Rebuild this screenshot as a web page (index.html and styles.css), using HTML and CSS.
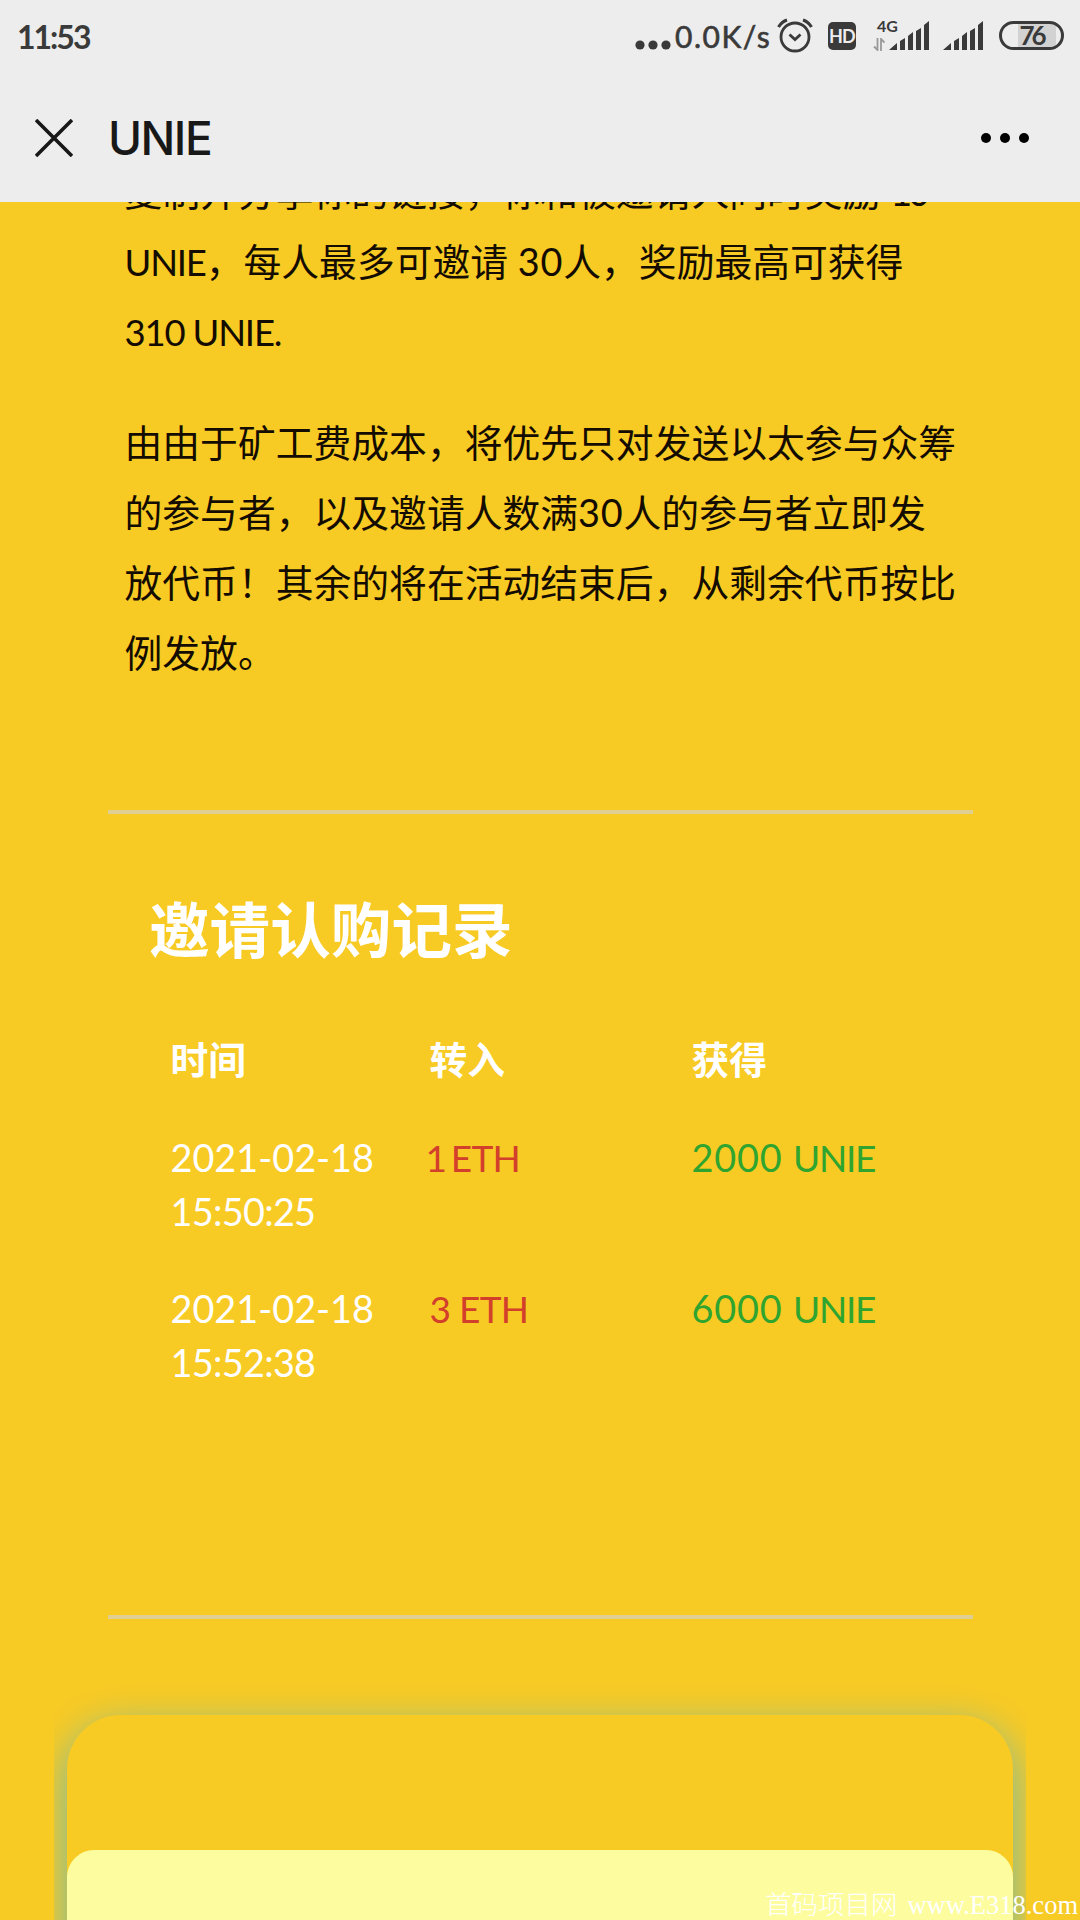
FILE: index.html
```html
<!DOCTYPE html>
<html lang="zh-CN">
<head>
    <meta charset="UTF-8">
    <meta name="viewport" content="width=device-width, initial-scale=1.0">
    <title>UNIE</title>
    <link rel="stylesheet" href="styles.css">
</head>
<body>
    <header>
        <div class="status-bar">
            <span class="clock">11:53</span>
            <div class="status-icons">
                <svg class="dots" width="36" height="10" viewBox="0 0 36 10" fill="#3a3a3a">
                    <circle cx="5" cy="5" r="4.6"/>
                    <circle cx="18" cy="5" r="4.6"/>
                    <circle cx="31" cy="5" r="4.6"/>
                </svg>
                <span class="speed">0.0K/s</span>
                <svg class="alarm" width="36" height="36" viewBox="0 0 36 36" fill="none" stroke="#3a3a3a" stroke-width="2.8">
                    <circle cx="18" cy="19" r="14"/>
                    <path d="M12.5 16.5l5.5 5 5.5-5"/>
                    <path d="M1.5 9Q5 3.500 10 2M34.500 9Q31 3.500 26 2" stroke-width="3.2"/>
                </svg>
                <span class="hd">HD</span>
                <div class="signal-4g">
                    <span class="network">4G</span>
                    <svg class="arrows" width="12" height="13" viewBox="0 0 12 13" fill="none" stroke="#999" stroke-width="1.8">
                        <path d="M4.5 0v12L1 8.500M8 13V1l3.500 3.500"/>
                    </svg>
                    <svg class="bars" width="41" height="30" viewBox="0 0 41 30" fill="#3a3a3a">
                        <path d="M0 29l8-7v7zM11 20l5-3v12h-5zM19 15l5-4v18h-5zM27 10l5-3v22h-5zM35 4l5-4v29h-5z"/>
                    </svg>
                </div>
                <svg class="bars second" width="41" height="30" viewBox="0 0 41 30" fill="#3a3a3a">
                    <path d="M0 29l8-7v7zM11 20l5-3v12h-5zM19 15l5-4v18h-5zM27 10l5-3v22h-5zM35 4l5-4v29h-5z"/>
                </svg>
                <span class="battery">76</span>
            </div>
        </div>
        <div class="nav-bar">
            <svg class="close" width="38" height="38" viewBox="0 0 38 38" stroke="#181818" stroke-width="3.6">
                <path d="M1 1l36 36M37 1L1 37"/>
            </svg>
            <h1>UNIE</h1>
            <svg class="more" width="50" height="12" viewBox="0 0 50 12" fill="#000">
                <circle cx="6" cy="6" r="5"/>
                <circle cx="25" cy="6" r="5"/>
                <circle cx="44" cy="6" r="5"/>
            </svg>
        </div>
    </header>

    <main>
        <div class="intro">
            <p>复制并分享你的链接，你和被邀请人同时奖励 <span class="ten">10</span><br><span class="latin">UNIE</span>，每人最多可邀请 <span class="thirty">30</span>人，奖励最高可获得<br><span class="latin">310 UNIE.</span></p>
            <p>由由于矿工费成本，将优先只对发送以太参与众筹<br>的参与者，以及邀请人数满<span class="thirty">30</span>人的参与者立即发<br>放代币！其余的将在活动结束后，从剩余代币按比<br>例发放。</p>
        </div>
        <hr>

        <section class="records">
            <h2>邀请认购记录</h2>
            <div class="table">
                <div class="row head">
                    <span>时间</span>
                    <span>转入</span>
                    <span>获得</span>
                </div>
                <div class="row">
                    <span class="time">2021-02-18<br><span class="clock-time">15:50:25</span></span>
                    <span class="sent"><span class="one">1</span> ETH</span>
                    <span class="got">2000 <span class="unit">UNIE</span></span>
                </div>
                <div class="row">
                    <span class="time">2021-02-18<br><span class="clock-time">15:52:38</span></span>
                    <span class="sent">3 ETH</span>
                    <span class="got">6000 <span class="unit">UNIE</span></span>
                </div>
            </div>
        </section>
        <hr>

        <div class="card-wrap">
            <div class="card">
                <div class="panel"></div>
            </div>
        </div>
    </main>

    <div class="watermark">首码项目网 <span>www.E318.com</span></div>
</body>
</html>
```
FILE: styles.css
```css
body {
    font-family: Lato, "Noto Sans CJK SC", sans-serif;
    margin: 0;
    height: 1920px;
    display: flex;
    flex-direction: column;
    background-color: #f8ca24;
    color: #140c00;
    overflow: hidden;
    position: relative;
}
header {
    height: 202px;
    flex-shrink: 0;
    background-color: #ededed;
}
.status-bar {
    display: flex;
    justify-content: space-between;
    height: 72px;
    padding: 0 16px 0 17px;
    color: #3a3a3a;
}
.clock {
    font-size: 32px;
    font-weight: 700;
    line-height: 73px;
    letter-spacing: -2px;
}
.status-icons {
    display: flex;
    align-items: flex-start;
}
.dots {
    margin-top: 40px;
}
.speed {
    width: 99px;
    margin-left: 4px;
    font-size: 30px;
    line-height: 72px;
    letter-spacing: 1.5px;
    -webkit-text-stroke: 0.6px #3a3a3a;
    white-space: nowrap;
}
.alarm {
    margin: 18px 0 0 3px;
}
.hd {
    width: 28px;
    height: 28px;
    margin: 22px 0 0 15px;
    border-radius: 5px;
    background-color: #3a3a3a;
    color: #ededed;
    font-size: 18px;
    font-weight: 700;
    line-height: 29px;
    letter-spacing: -0.8px;
    text-align: center;
}
.signal-4g {
    display: grid;
    grid-template-columns: 16px 41px;
    width: 57px;
    height: 50px;
    margin: 18px 0 0 17px;
    position: relative;
}
.network {
    position: absolute;
    left: 4px;
    top: -1px;
    font-size: 16px;
    font-weight: 700;
    line-height: 18px;
}
.arrows {
    margin-top: 20px;
}
.bars {
    margin-top: 3px;
}
.bars.second {
    margin: 21px 0 0 13px;
}
.battery {
    box-sizing: border-box;
    width: 65px;
    height: 29px;
    margin: 21px 0 0 15px;
    border: 3px solid #3a3a3a;
    border-radius: 15px;
    background: linear-gradient(90deg, #ededed 16px, #d2d2d2 16px) 0 0 / 54px 100% no-repeat;
    font-size: 26px;
    font-weight: 700;
    line-height: 23px;
    letter-spacing: -3px;
    text-align: center;
}
.nav-bar {
    display: flex;
    align-items: center;
    height: 131px;
    padding: 0 50px 0 35px;
    box-sizing: border-box;
}
.nav-bar h1 {
    margin: 1px 0 0 35px;
    font-family: Inter, sans-serif;
    font-size: 46px;
    font-weight: 500;
    line-height: 60px;
    letter-spacing: -1.5px;
    color: #181818;
}
.more {
    margin-left: auto;
}
main {
    flex: 1;
    display: flex;
    flex-direction: column;
    overflow: hidden;
}
.intro {
    height: 653px;
    margin: -45px 108px 0 124.5px;
    flex-shrink: 0;
}
.intro p {
    margin: 0 0 41px;
    font-size: 37.8px;
    font-weight: 400;
    line-height: 70px;
    white-space: nowrap;
}
.latin {
    font-size: 36.5px;
    letter-spacing: -1.2px;
}
.ten {
    letter-spacing: -4px;
}
.thirty {
    letter-spacing: 0.8px;
}
hr {
    width: 865px;
    height: 4px;
    margin: 0 auto;
    border: 0;
    flex-shrink: 0;
    background-color: #e0cf92;
}
.records {
    height: 801px;
    padding: 0 108px;
    flex-shrink: 0;
    box-sizing: border-box;
    color: #fff;
}
.records h2 {
    margin: 71px 0 0 41px;
    font-size: 60.6px;
    font-weight: 700;
    line-height: 90px;
}
.table {
    margin: 58px 0 0 62.5px;
    font-size: 37.8px;
}
.row {
    display: grid;
    grid-template-columns: 259px 262px 1fr;
    line-height: 54px;
    margin-bottom: 43px;
}
.head {
    margin-bottom: 44px;
    font-weight: 700;
}
.clock-time {
    letter-spacing: -0.7px;
}
.sent {
    font-size: 37px;
    letter-spacing: -0.7px;
    color: #d2402c;
}
.one {
    letter-spacing: -5px;
    margin-left: -4px;
}
.got {
    letter-spacing: 0.8px;
    color: #2fa530;
}
.unit {
    font-size: 37px;
    letter-spacing: -1.2px;
}
.card-wrap {
    flex: 1;
    margin: 0 54px;
    padding: 96px 13px 0;
    overflow: hidden;
}
.card {
    height: 400px;
    padding-top: 135px;
    border-radius: 54px;
    background-color: #f8ca24;
    box-shadow: 0 13px 40px #6fbab0;
}
.panel {
    height: 300px;
    border-radius: 27px;
    background-color: #fdfd9f;
}
.watermark {
    position: absolute;
    right: 2px;
    bottom: 1px;
    color: #fff;
    font-family: "Noto Sans CJK SC", sans-serif;
    font-size: 26.5px;
    font-weight: 300;
    line-height: 28px;
    white-space: nowrap;
}
.watermark span {
    margin-left: 4px;
    font-family: "Liberation Serif", serif;
}
```
